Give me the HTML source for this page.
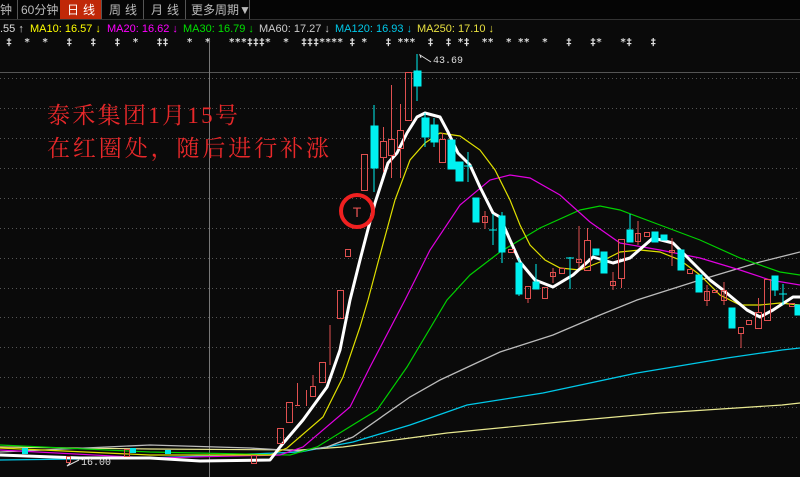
<!DOCTYPE html>
<html><head><meta charset="utf-8"><style>
body{margin:0;background:#0a0a0a;width:800px;height:477px;overflow:hidden;font-family:"Liberation Sans","Noto Sans CJK SC",sans-serif}
svg{display:block}
</style></head><body>
<svg width="800" height="477" viewBox="0 0 800 477" xmlns="http://www.w3.org/2000/svg">
<rect width="800" height="477" fill="#0a0a0a"/>
<rect x="0" y="0" width="800" height="19" fill="#050505"/>
<line x1="0" y1="19.5" x2="800" y2="19.5" stroke="#333"/>
<g font-size="12" fill="#bbb" font-family="Liberation Sans,Noto Sans CJK SC,sans-serif">
<text x="0" y="14">钟</text>
<line x1="17.5" y1="0" x2="17.5" y2="19" stroke="#555"/>
<text x="21" y="14">60分钟</text>
<rect x="60" y="0" width="41" height="19" fill="#c02808"/>
<text x="67" y="14" fill="#fff" letter-spacing="4">日线</text>
<line x1="101.5" y1="0" x2="101.5" y2="19" stroke="#555"/>
<text x="109" y="14" letter-spacing="4">周线</text>
<line x1="143.5" y1="0" x2="143.5" y2="19" stroke="#555"/>
<text x="151" y="14" letter-spacing="4">月线</text>
<line x1="185.5" y1="0" x2="185.5" y2="19" stroke="#555"/>
<text x="191" y="14">更多周期▼</text>
<line x1="249.5" y1="0" x2="249.5" y2="19" stroke="#555"/>
</g>
<g font-size="11" font-family="Liberation Sans,sans-serif">
<text x="0" y="32" fill="#ddd">.55 ↑</text>
<text x="30" y="32" fill="#ffff00">MA10: 16.57 ↓</text>
<text x="107" y="32" fill="#ff00ff">MA20: 16.62 ↓</text>
<text x="183" y="32" fill="#00e000">MA30: 16.79 ↓</text>
<text x="259" y="32" fill="#ccc">MA60: 17.27 ↓</text>
<text x="335" y="32" fill="#00c8e8">MA120: 16.93 ↓</text>
<text x="417" y="32" fill="#e8e040">MA250: 17.10 ↓</text>
</g>
<text x="0" y="45" font-size="10" fill="#ddd" font-weight="bold" font-family="DejaVu Sans Mono,monospace" xml:space="preserve"> ‡  *  *   ‡   ‡   ‡  *   ‡‡   *  *   ***‡‡‡*  *  ‡‡‡**** ‡ *   ‡ ***  ‡  ‡ *‡  **  * **  *   ‡   ‡*   *‡   ‡</text>
<line x1="0" y1="72.5" x2="800" y2="72.5" stroke="#555"/>
<g stroke="#555" stroke-dasharray="1,3">
<line x1="0" y1="78.5" x2="800" y2="78.5"/><line x1="0" y1="108.5" x2="800" y2="108.5"/><line x1="0" y1="138.5" x2="800" y2="138.5"/><line x1="0" y1="168.5" x2="800" y2="168.5"/><line x1="0" y1="198.5" x2="800" y2="198.5"/><line x1="0" y1="228.5" x2="800" y2="228.5"/><line x1="0" y1="258.5" x2="800" y2="258.5"/><line x1="0" y1="288.5" x2="800" y2="288.5"/><line x1="0" y1="317.5" x2="800" y2="317.5"/><line x1="0" y1="347.5" x2="800" y2="347.5"/><line x1="0" y1="377.5" x2="800" y2="377.5"/><line x1="0" y1="407.5" x2="800" y2="407.5"/><line x1="0" y1="437.5" x2="800" y2="437.5"/>
</g>
<line x1="209.5" y1="38" x2="209.5" y2="477" stroke="#777"/>
<g fill="none">
<polyline stroke="#e8e890" stroke-width="1.2" points="0,447 150,449 300,450 343,447 447,433 560,422 660,413 782,405 800,403"/>
<polyline stroke="#00c8e8" stroke-width="1.3" points="0,460 150,458 300,452 353,442 410,425 467,405 543,393 637,373 727,358 782,350 800,348"/>
<polyline stroke="#bbb" stroke-width="1.3" points="0,452 150,445 250,448 300,451 327,447 353,437 410,397 440,380 500,352 553,335 600,315 637,300 700,280 760,262 800,252"/>
<polyline stroke="#00d000" stroke-width="1.2" points="0,445 150,452 290,455 317,447 377,410 407,367 447,300 470,275 500,252 540,228 580,210 600,206 620,210 660,225 700,240 740,258 780,272 800,275"/>
<polyline stroke="#e000e0" stroke-width="1.2" points="0,450 150,458 280,455 303,447 350,407 370,367 405,300 430,250 460,205 490,180 510,175 530,178 560,195 590,222 620,243 660,250 700,258 740,270 770,280 800,285"/>
<polyline stroke="#e0e000" stroke-width="1.2" points="0,448 150,455 270,455 287,448 323,417 343,377 360,327 368,300 380,255 395,200 410,160 425,143 440,133 460,136 480,150 495,170 510,200 520,225 530,245 545,260 560,268 580,270 600,262 620,252 640,250 660,252 680,260 700,275 720,295 740,305 760,305 780,303 800,305"/>
<polyline stroke="#fff" stroke-width="3" stroke-linejoin="round" points="0,455 80,458 150,458 200,461 270,460 280,447 303,420 327,387 340,350 350,300 360,260 367,233 375,203 388,163 397,153 407,133 417,117 425,113 440,117 448,132 458,153 470,165 480,187 493,213 500,217 510,240 520,262 535,280 553,287 573,275 593,257 613,263 630,258 653,238 673,243 687,257 710,280 723,290 747,310 760,317 773,310 793,297 800,297"/>
</g>
<g fill="#00e8e8"><rect x="22" y="448" width="6" height="6"/><rect x="130" y="448" width="6" height="5"/><rect x="165" y="450" width="6" height="4"/></g>
<g fill="none" stroke="#e05050"><rect x="66.5" y="456.5" width="4" height="6"/><rect x="124.5" y="449.5" width="5" height="7"/><rect x="251.5" y="455.5" width="5" height="8"/></g>
<g fill="none" stroke="#e05050" stroke-width="1">
<rect x="277.5" y="428.5" width="6" height="15"/>
<rect x="286.5" y="402.5" width="6" height="20"/><line x1="297.5" y1="383" x2="297.5" y2="405"/><line x1="295" y1="405.5" x2="300" y2="405.5"/>
<line x1="306.5" y1="390" x2="306.5" y2="406"/><rect x="310.5" y="386.5" width="5" height="10"/><line x1="313" y1="375" x2="313" y2="386"/>
<rect x="319.5" y="362.5" width="6" height="20"/><line x1="330" y1="325" x2="330" y2="365"/>
<rect x="337.5" y="290.5" width="6" height="28"/>
<rect x="345.5" y="249.5" width="5" height="7"/>
<rect x="361.5" y="154.5" width="6" height="36"/>
<rect x="380.5" y="141.5" width="6" height="16"/><line x1="383.5" y1="127" x2="383.5" y2="141"/><line x1="383.5" y1="158" x2="383.5" y2="172"/>
<rect x="388.5" y="139.5" width="6" height="16"/><line x1="391.5" y1="85" x2="391.5" y2="139"/><line x1="391.5" y1="156" x2="391.5" y2="178"/>
<rect x="397.5" y="130.5" width="6" height="18"/><line x1="400.5" y1="104" x2="400.5" y2="130"/><line x1="400.5" y1="149" x2="400.5" y2="178"/>
<rect x="405.5" y="72.5" width="6" height="48"/>
<rect x="439.5" y="139.5" width="6" height="23"/><line x1="442.5" y1="133" x2="442.5" y2="139"/>
<rect x="482.5" y="216.5" width="5" height="6"/><line x1="485" y1="211" x2="485" y2="229"/>
<rect x="508.5" y="249.5" width="5" height="3"/>
<rect x="525.5" y="286.5" width="5" height="12"/><line x1="528" y1="298" x2="528" y2="303"/>
<rect x="542.5" y="287.5" width="5" height="11"/>
<rect x="550.5" y="272.5" width="5" height="4"/><line x1="553" y1="268" x2="553" y2="283"/>
<rect x="559.5" y="268.5" width="5" height="5"/>
<rect x="576.5" y="259.5" width="5" height="3"/><line x1="579" y1="226" x2="579" y2="268"/>
<rect x="584.5" y="240.5" width="6" height="30"/><line x1="587.5" y1="228" x2="587.5" y2="240"/>
<rect x="610.5" y="281.5" width="5" height="4"/><line x1="613" y1="272" x2="613" y2="290"/>
<rect x="618.5" y="239.5" width="6" height="39"/><line x1="621.5" y1="278" x2="621.5" y2="288"/>
<rect x="635.5" y="233.5" width="5" height="8"/><line x1="638" y1="221" x2="638" y2="245"/>
<rect x="644.5" y="232.5" width="5" height="4"/>
<rect x="669.5" y="250.5" width="5" height="2"/><line x1="672" y1="238" x2="672" y2="266"/>
<rect x="687.5" y="269.5" width="5" height="4"/>
<rect x="704.5" y="291.5" width="5" height="9"/><line x1="707" y1="285" x2="707" y2="306"/>
<rect x="712.5" y="290.5" width="5" height="2"/>
<rect x="721.5" y="290.5" width="5" height="10"/><line x1="724" y1="282" x2="724" y2="305"/>
<rect x="738.5" y="327.5" width="5" height="6"/><line x1="741" y1="333" x2="741" y2="348"/>
<rect x="746.5" y="320.5" width="5" height="4"/>
<rect x="755.5" y="312.5" width="6" height="16"/><line x1="758.5" y1="298" x2="758.5" y2="312"/>
<rect x="764.5" y="279.5" width="6" height="41"/>
<rect x="789.5" y="303.5" width="5" height="3"/>
</g>
<g fill="#00f0f0" stroke="#00f0f0">
<line x1="374" y1="105" x2="374" y2="192"/><rect x="371" y="126" width="7" height="42"/>
<line x1="417" y1="54" x2="417" y2="101"/><rect x="414" y="71" width="7" height="15"/>
<line x1="425" y1="113" x2="425" y2="147"/><rect x="422" y="118" width="7" height="19"/>
<line x1="434" y1="118" x2="434" y2="147"/><rect x="431" y="125" width="7" height="17"/>
<rect x="448" y="140" width="7" height="29"/>
<rect x="456" y="162" width="7" height="19"/>
<line x1="468" y1="152" x2="468" y2="182"/><line x1="464" y1="166" x2="472" y2="166"/>
<rect x="473" y="198" width="6" height="24"/>
<line x1="493" y1="214" x2="493" y2="245"/><line x1="489" y1="230" x2="497" y2="230"/>
<line x1="502" y1="212" x2="502" y2="263"/><rect x="499" y="216" width="6" height="36"/>
<line x1="519" y1="258" x2="519" y2="296"/><rect x="516" y="263" width="6" height="31"/>
<line x1="536" y1="264" x2="536" y2="289"/><rect x="533" y="282" width="6" height="7"/>
<line x1="570" y1="257" x2="570" y2="289"/><line x1="566" y1="258" x2="574" y2="258"/>
<rect x="593" y="249" width="6" height="6"/>
<rect x="601" y="252" width="6" height="21"/>
<line x1="630" y1="214" x2="630" y2="242"/><rect x="627" y="230" width="6" height="12"/>
<rect x="652" y="232" width="6" height="10"/>
<rect x="661" y="235" width="6" height="5"/>
<rect x="678" y="250" width="6" height="20"/>
<rect x="696" y="275" width="6" height="17"/>
<rect x="729" y="308" width="6" height="20"/>
<line x1="775" y1="276" x2="775" y2="296"/><rect x="772" y="276" width="6" height="14"/>
<line x1="783" y1="284" x2="783" y2="305"/><line x1="779" y1="294" x2="787" y2="294"/>
<rect x="795" y="305" width="5" height="10"/>
</g>
<polyline points="431,62 420,55 421,58" fill="none" stroke="#ddd"/>
<text x="433" y="63" font-size="10" fill="#ddd" font-family="Liberation Mono,monospace">43.69</text>
<polyline points="79,460 67,466 70,463" fill="none" stroke="#ddd"/>
<text x="81" y="465" font-size="10" fill="#ddd" font-family="Liberation Mono,monospace">16.00</text>
<g fill="#e8282a" font-family="Liberation Serif,Noto Serif CJK SC,serif" font-size="23">
<text x="47" y="123" letter-spacing="2.3">泰禾集团1月15号</text>
<text x="47" y="156" letter-spacing="2.9">在红圈处，随后进行补涨</text>
</g>
<circle cx="357" cy="211" r="16" fill="none" stroke="#f02020" stroke-width="4"/>
<text x="357" y="217" font-size="14" fill="#e05050" text-anchor="middle" font-family="Liberation Sans,sans-serif">T</text>
</svg>
</body></html>
